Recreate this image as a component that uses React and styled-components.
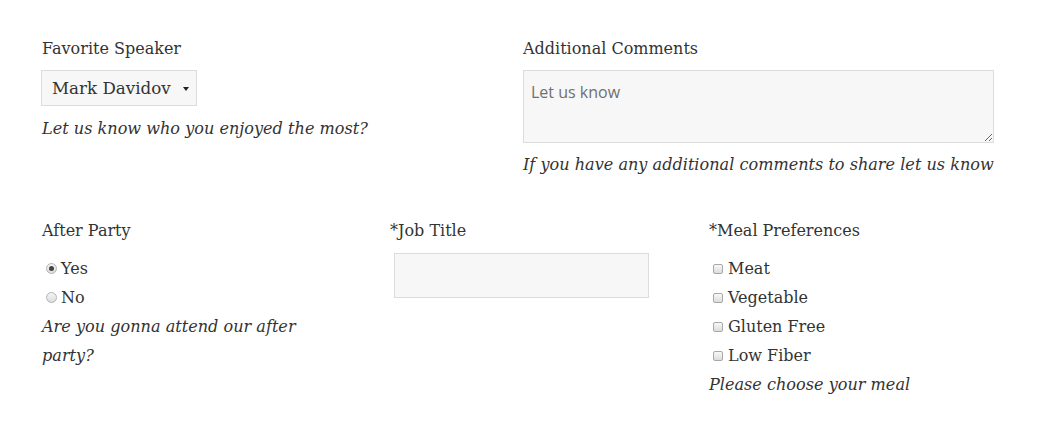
import React from "react";
import styled, { createGlobalStyle } from "styled-components";

const GlobalStyle = createGlobalStyle`
  body {
    margin: 0;
    background: #fff;
    color: #333;
    font-family: "DejaVu Serif", "Liberation Serif", serif;
  }
`;

const Form = styled.form`
  width: 952px;
  padding: 37px 0 0 42px;
`;

const Row = styled.div`
  display: grid;
  grid-template-columns: ${(p) => p.columns};
  column-gap: ${(p) => p.gap || 0}px;
  margin-bottom: ${(p) => p.spacing || 0}px;
`;

const Field = styled.div`
  display: flex;
  flex-direction: column;
  align-items: flex-start;
`;

const Label = styled.label`
  font-size: 16px;
  line-height: 24px;
  margin-bottom: 9px;
`;

const Help = styled.p`
  margin: ${(p) => p.gap || 0}px 0 0;
  font-size: 16.1px;
  font-style: italic;
  line-height: 29px;
  width: ${(p) => p.width || "auto"};
`;

const SelectWrap = styled.div`
  position: relative;
  width: 156px;
  height: 36px;
  margin-left: -1px;
  box-sizing: border-box;
  border: 1px solid #dcdcdc;
  background: #f7f7f7;

  &::after {
    content: "";
    position: absolute;
    right: 7px;
    top: 16px;
    border-left: 3px solid transparent;
    border-right: 3px solid transparent;
    border-top: 4px solid #222;
    pointer-events: none;
  }
`;

const Select = styled.select`
  appearance: none;
  width: 100%;
  height: 100%;
  border: 0;
  background: transparent;
  padding: 0 0 0 10px;
  font-family: "DejaVu Serif", serif;
  font-size: 16.7px;
  color: #333;
  outline: none;
`;

const TextArea = styled.textarea`
  box-sizing: border-box;
  width: 471px;
  height: 73px;
  border: 1px solid #dcdcdc;
  background: #f7f7f7;
  padding: 9px 7px;
  font-family: "Open Sans", sans-serif;
  font-size: 16px;
  line-height: 24px;
  color: #333;
  resize: vertical;
  outline: none;

  &::placeholder {
    color: #707070;
  }
`;

const TextInput = styled.input`
  box-sizing: border-box;
  width: 255px;
  height: 45px;
  margin: 1px 0 0 4px;
  border: 1px solid #dcdcdc;
  background: #f7f7f7;
  outline: none;
`;

const Options = styled.div`
  display: flex;
  flex-direction: column;
  padding: 2px 0 0 4px;
`;

const Option = styled.label`
  display: flex;
  align-items: center;
  gap: 4px;
  font-size: 16px;
  line-height: 29px;
`;

const Radio = styled.input.attrs({ type: "radio" })`
  appearance: none;
  margin: 0;
  width: 11px;
  height: 11px;
  border-radius: 50%;
  border: 1px solid #b4b4b4;
  background: linear-gradient(#f4f4f4, #dedede);
  box-sizing: border-box;
  display: grid;
  place-items: center;

  &:checked::before {
    content: "";
    width: 5px;
    height: 5px;
    border-radius: 50%;
    background: #444;
  }
`;

const Checkbox = styled.input.attrs({ type: "checkbox" })`
  appearance: none;
  margin: 0 1px 0 0;
  width: 10px;
  height: 10px;
  border-radius: 2px;
  border: 1px solid #a8a8a8;
  background: linear-gradient(#f8f8f8, #dcdcdc);
  box-sizing: border-box;
`;

const meals = ["Meat", "Vegetable", "Gluten Free", "Low Fiber"];

export default function App() {
  return (
    <>
      <GlobalStyle />
      <Form onSubmit={(e) => e.preventDefault()}>
        <Row columns="471px 471px" gap={10} spacing={40}>
          <Field>
            <Label>Favorite Speaker</Label>
            <SelectWrap>
              <Select defaultValue="Mark Davidov">
                <option>Mark Davidov</option>
              </Select>
            </SelectWrap>
            <Help gap={8}>Let us know who you enjoyed the most?</Help>
          </Field>
          <Field>
            <Label>Additional Comments</Label>
            <TextArea placeholder="Let us know" />
            <Help gap={7}>
              If you have any additional comments to share let us know
            </Help>
          </Field>
        </Row>
        <Row columns="348px 319px 1fr">
          <Field>
            <Label>After Party</Label>
            <Options>
              <Option>
                <Radio name="party" defaultChecked />
                Yes
              </Option>
              <Option>
                <Radio name="party" />
                No
              </Option>
            </Options>
            <Help width="272px">Are you gonna attend our after party?</Help>
          </Field>
          <Field>
            <Label>*Job Title</Label>
            <TextInput type="text" />
          </Field>
          <Field>
            <Label>*Meal Preferences</Label>
            <Options>
              {meals.map((m) => (
                <Option key={m}>
                  <Checkbox />
                  {m}
                </Option>
              ))}
            </Options>
            <Help>Please choose your meal</Help>
          </Field>
        </Row>
      </Form>
    </>
  );
}
